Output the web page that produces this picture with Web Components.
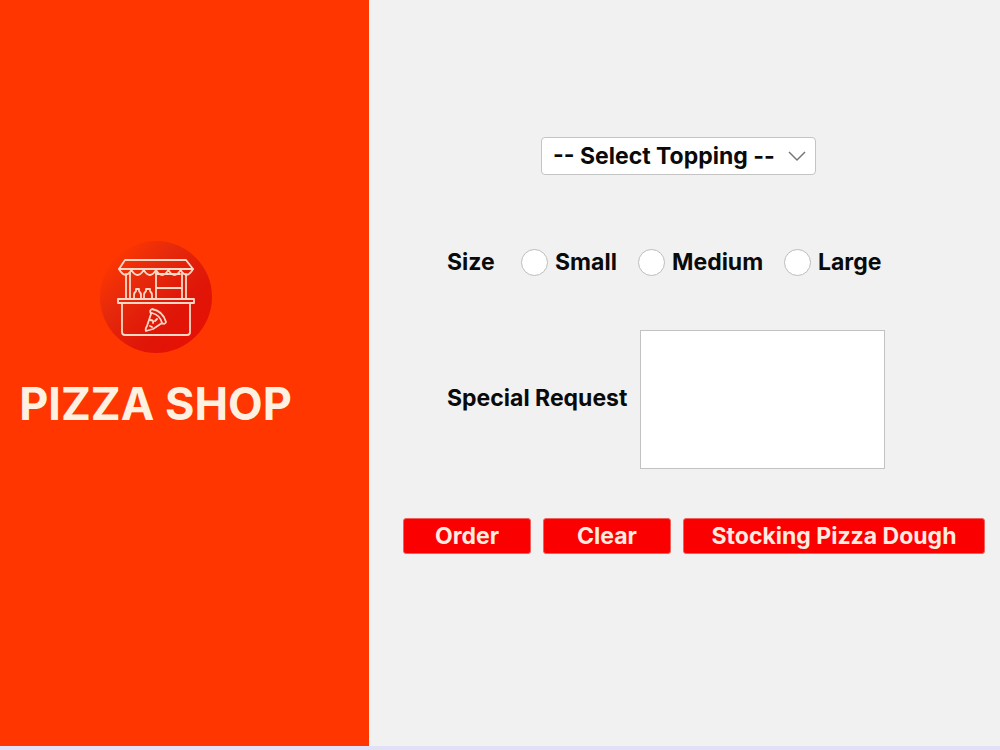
<!DOCTYPE html>
<html lang="en">
<head>
<meta charset="utf-8">
<meta name="viewport" content="width=device-width, initial-scale=1">
<title>Pizza Shop</title>
<style>
  body { margin: 0; font-family: Inter, "Open Sans", sans-serif; font-weight: 700; font-size: 23px; line-height: 28px; color: #0a0a0a; }
</style>
</head>
<body>
<pizza-app>
  <shop-brand slot="brand">PIZZA SHOP</shop-brand>
  <order-form slot="content"></order-form>
</pizza-app>

<script>
const define = (name, html, setup) => {
  const template = document.createElement('template');
  template.innerHTML = html;
  customElements.define(name, class extends HTMLElement {
    constructor() {
      super();
      this.attachShadow({ mode: 'open' }).append(template.content.cloneNode(true));
      if (setup) setup(this.shadowRoot);
    }
  });
};

define('pizza-app', `
  <style>
    :host { display: grid; grid-template-columns: 36.9% 1fr; min-height: 100vh; box-sizing: border-box; border-bottom: 4px solid #e1e0f7; background: #f1f1f1; }
    aside { background: #ff3600; }
    main { min-width: 0; }
  </style>
  <aside><slot name="brand"></slot></aside>
  <main><slot name="content"></slot></main>
`);

define('shop-logo', `
  <style>
    :host { display: block; width: 112px; height: 112px; }
    svg { display: block; width: 100%; height: 100%; }
  </style>
  <svg viewBox="0 0 112 112" role="img" aria-label="Pizza stall">
    <defs>
      <linearGradient id="disc" x1="0" y1="0" x2="1" y2="1">
        <stop offset=".12" stop-color="#ff3600"/>
        <stop offset=".35" stop-color="#e62a0c"/>
        <stop offset=".65" stop-color="#df1608"/>
        <stop offset="1" stop-color="#ea0e02"/>
      </linearGradient>
    </defs>
    <circle cx="56" cy="56" r="56" fill="url(#disc)"/>
    <g fill="none" stroke="#ffd9c6" stroke-width="1.8" stroke-linejoin="round" stroke-linecap="round">
      <path d="M25 19H86L93 28H19Z"/>
      <path d="M19 28q6.200 11 12.400 1q6.100 10 12.300 0q6.200 10 12.300 0q6.200 10 12.300 0q6.200 10 12.300 0q6.200 10 12.400-1"/>
      <path d="M26 33V58M30 32V58M82 32V58M86 33V58M56 30V58M56 47H82M56 33H80"/>
      <path d="M18 58H94V62H18ZM22 62V91Q22 94 25 94H87Q90 94 90 91V62"/>
      <path d="M34 58V54Q34 52 36 50V48H39V50Q41 52 41 54V58M44 58V54Q44 52 46 50V48H50V50Q52 52 52 54V58"/>
      <path d="M52 68Q63 70 66 81Q65 84 62 82L53 88L46 90Q45 88 47 85L51 73Q49 69 52 68ZM52 72Q60 74 62 82"/>
      <path d="M50 79q4 0 3 3M57 78l-2 2M50 85l2 1"/>
    </g>
  </svg>
`);

define('shop-brand', `
  <style>
    :host { display: flex; flex-direction: column; align-items: center; gap: 23px; padding: 241px 58px 0 0; }
    h1 { margin: 0; font-size: 45px; line-height: 56px; font-weight: 700; color: #fff1e2; white-space: nowrap; }
  </style>
  <shop-logo></shop-logo>
  <h1><slot></slot></h1>
`);

define('topping-select', `
  <style>
    :host { display: grid; grid-template-columns: 1fr; width: 275px; }
    select, svg { grid-area: 1 / 1; }
    select { appearance: none; box-sizing: border-box; width: 100%; height: 38px; margin: 0; padding: 0 40px 0 11px; border: 1px solid #c4c4c4; border-radius: 4px; background: #fff; color: inherit; font: inherit; }
    svg { width: 20px; height: 12px; align-self: center; justify-self: end; margin-right: 9px; pointer-events: none; z-index: 1; }
  </style>
  <select aria-label="Topping">
    <option>-- Select Topping --</option>
  </select>
  <svg viewBox="0 0 20 12" aria-hidden="true"><path d="M2 2L10 10L18 2" fill="none" stroke="#777" stroke-width="1.500"/></svg>
`);

define('size-picker', `
  <style>
    :host { display: block; }
    div { display: grid; grid-template-columns: 74px 117px 146px auto; align-items: center; justify-content: start; }
    label { display: flex; align-items: center; gap: 7px; white-space: nowrap; }
    input { appearance: none; box-sizing: border-box; width: 27px; height: 27px; margin: 0; border: 1px solid #bdbdbd; border-radius: 50%; background: #fff; }
    input:checked { border: 8px solid #f00; }
  </style>
  <div role="radiogroup" aria-labelledby="title">
    <span id="title">Size</span>
    <label><input type="radio" name="size" value="small">Small</label>
    <label><input type="radio" name="size" value="medium">Medium</label>
    <label><input type="radio" name="size" value="large">Large</label>
  </div>
`);

define('request-field', `
  <style>
    :host { display: grid; grid-template-columns: 193px 245px; align-items: center; }
    label { white-space: nowrap; padding-bottom: 4px; }
    textarea { display: block; box-sizing: border-box; width: 100%; height: 139px; margin: 0; padding: 8px; border: 1px solid #c2c2c2; border-radius: 0; background: #fff; color: inherit; font: inherit; resize: none; }
  </style>
  <label for="request"><slot></slot></label>
  <textarea id="request"></textarea>
`);

define('shop-button', `
  <style>
    :host { display: block; }
    button { box-sizing: border-box; width: 100%; height: 36px; margin: 0; padding: 0; border: 1px solid #f0605c; border-radius: 3px; background: #fb0000; color: #ffebe0; font: inherit; white-space: nowrap; }
  </style>
  <button type="button"><slot></slot></button>
`);

define('order-form', `
  <style>
    :host { display: block; padding: 137px 15px 0 34px; }
    form { display: grid; width: 582px; max-width: 100%; margin: 0 auto; }
    topping-select { margin: 0 0 73px 138px; }
    size-picker { margin: 0 0 54px 44px; }
    request-field { margin: 0 0 49px 44px; }
    .actions { display: grid; grid-template-columns: 128px 128px 1fr; gap: 12px; }
  </style>
  <form>
    <topping-select></topping-select>
    <size-picker></size-picker>
    <request-field>Special Request</request-field>
    <div class="actions">
      <shop-button>Order</shop-button>
      <shop-button>Clear</shop-button>
      <shop-button>Stocking Pizza Dough</shop-button>
    </div>
  </form>
`);
</script>
</body>
</html>
